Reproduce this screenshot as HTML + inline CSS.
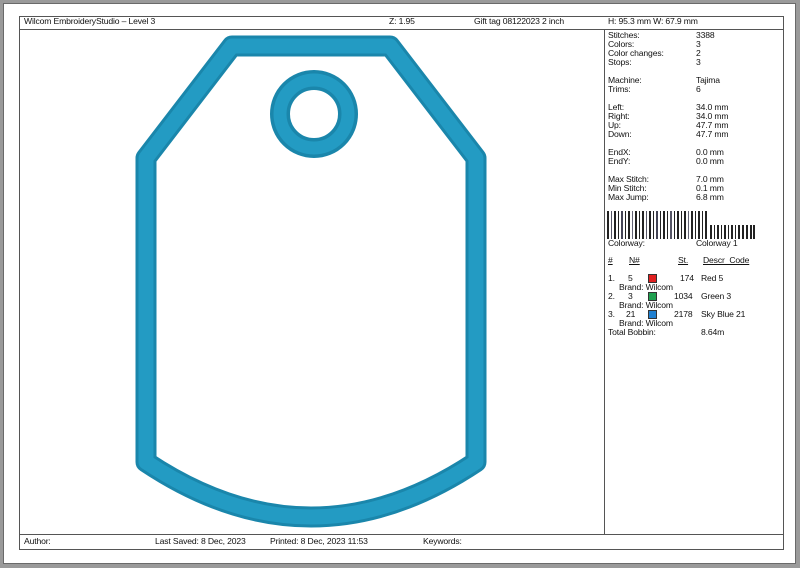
<!DOCTYPE html>
<html><head><meta charset="utf-8"><style>
html,body{margin:0;padding:0}
body{width:800px;height:568px;background:#9a9a9a;position:relative;overflow:hidden;font-family:"Liberation Sans",Arial,sans-serif;font-size:8.6px;color:#111;letter-spacing:-0.15px}
#page{position:absolute;left:3px;top:3px;width:793px;height:561px;background:#fff;border:1px solid #6a6a6a;box-sizing:border-box}
#frame{position:absolute;left:19px;top:16px;width:765px;height:534px;border:1px solid #555;box-sizing:border-box}
.t{position:absolute;white-space:nowrap;line-height:9px}
.hl{position:absolute;background:#555}
u{text-decoration:underline}
.sw{position:absolute;width:7px;height:7px;border:1px solid #333}
</style></head><body>
<div id="page"></div>
<div id="frame"></div>
<div class="hl" style="left:19px;top:29px;width:765px;height:1px"></div>
<div class="hl" style="left:19px;top:534px;width:765px;height:1px"></div>
<div class="hl" style="left:604px;top:29px;width:1px;height:505px"></div>

<div class="t" style="left:24px;top:17px">Wilcom EmbroideryStudio – Level 3</div>
<div class="t" style="left:389px;top:17px">Z: 1.95</div>
<div class="t" style="left:474px;top:17px">Gift tag  08122023 2 inch</div>
<div class="t" style="left:608px;top:17px">H: 95.3 mm   W: 67.9 mm</div>

<div class="t" style="left:24px;top:537px">Author:</div>
<div class="t" style="left:155px;top:537px">Last Saved:  8 Dec, 2023</div>
<div class="t" style="left:270px;top:537px">Printed:  8 Dec, 2023 11:53</div>
<div class="t" style="left:423px;top:537px">Keywords:</div>

<svg style="position:absolute;left:0;top:0" width="800" height="568">
<g fill="none" stroke="#1a86ab" stroke-linejoin="round">
<path d="M146 158 L232 46 L390 46 L476 158 L476 462 Q311 572 146 462 Z" stroke-width="21"/>
<path d="M146 158 L232 46 L390 46 L476 158 L476 462 Q311 572 146 462 Z" stroke="#239bc3" stroke-width="15"/>
<circle cx="314" cy="114" r="34" stroke-width="20"/>
<circle cx="314" cy="114" r="34" stroke="#239bc3" stroke-width="13"/>
</g>
<g fill="#222">
<rect x="607" y="211" width="2" height="28"/><rect x="611" y="211" width="1" height="28" fill="#556"/><rect x="614" y="211" width="2" height="28"/><rect x="618" y="211" width="1" height="28"/><rect x="621" y="211" width="2" height="28" fill="#445"/><rect x="625" y="211" width="1" height="28"/><rect x="628" y="211" width="2" height="28"/><rect x="632" y="211" width="1" height="28" fill="#667"/><rect x="635" y="211" width="2" height="28"/><rect x="639" y="211" width="1" height="28"/><rect x="642" y="211" width="2" height="28"/><rect x="646" y="211" width="1" height="28" fill="#556"/><rect x="649" y="211" width="2" height="28"/><rect x="653" y="211" width="1" height="28"/><rect x="656" y="211" width="2" height="28" fill="#445"/><rect x="660" y="211" width="1" height="28"/><rect x="663" y="211" width="2" height="28"/><rect x="667" y="211" width="1" height="28"/><rect x="670" y="211" width="2" height="28" fill="#556"/><rect x="674" y="211" width="1" height="28"/><rect x="677" y="211" width="2" height="28"/><rect x="681" y="211" width="1" height="28"/><rect x="684" y="211" width="2" height="28"/><rect x="688" y="211" width="1" height="28" fill="#667"/><rect x="691" y="211" width="2" height="28"/><rect x="695" y="211" width="1" height="28"/><rect x="698" y="211" width="2" height="28"/><rect x="702" y="211" width="1" height="28"/><rect x="705" y="211" width="2" height="28"/>
<rect x="710" y="225" width="2" height="14"/><rect x="714" y="225" width="1" height="14"/><rect x="717" y="225" width="2" height="14"/><rect x="721" y="225" width="1" height="14"/><rect x="724" y="225" width="2" height="14"/><rect x="728" y="225" width="1" height="14"/><rect x="731" y="225" width="2" height="14"/><rect x="735" y="225" width="1" height="14"/><rect x="738" y="225" width="2" height="14"/><rect x="742" y="225" width="2" height="14"/><rect x="746" y="225" width="2" height="14"/><rect x="750" y="225" width="2" height="14"/><rect x="753" y="225" width="2" height="14"/>
</g>
</svg>

<div class="t" style="left:608px;top:31px">Stitches:<br>Colors:<br>Color changes:<br>Stops:<br><br>Machine:<br>Trims:<br><br>Left:<br>Right:<br>Up:<br>Down:<br><br>EndX:<br>EndY:<br><br>Max Stitch:<br>Min Stitch:<br>Max Jump:</div>
<div class="t" style="left:696px;top:31px">3388<br>3<br>2<br>3<br><br>Tajima<br>6<br><br>34.0 mm<br>34.0 mm<br>47.7 mm<br>47.7 mm<br><br>0.0 mm<br>0.0 mm<br><br>7.0 mm<br>0.1 mm<br>6.8 mm</div>

<div class="t" style="left:608px;top:239px">Colorway:</div>
<div class="t" style="left:696px;top:239px">Colorway 1</div>

<div class="t" style="left:608px;top:256px"><u>#</u></div>
<div class="t" style="left:629px;top:256px"><u>N#</u></div>
<div class="t" style="left:678px;top:256px"><u>St.</u></div>
<div class="t" style="left:703px;top:256px"><u>Descr_Code</u></div>

<div class="t" style="left:608px;top:274px">1.</div><div class="t" style="left:628px;top:274px">5</div><div class="sw" style="left:648px;top:274px;background:#e02020"></div><div class="t" style="left:680px;top:274px">174</div><div class="t" style="left:701px;top:274px">Red 5</div>
<div class="t" style="left:619px;top:283px">Brand: Wilcom</div>
<div class="t" style="left:608px;top:292px">2.</div><div class="t" style="left:628px;top:292px">3</div><div class="sw" style="left:648px;top:292px;background:#20a050"></div><div class="t" style="left:674px;top:292px">1034</div><div class="t" style="left:701px;top:292px">Green 3</div>
<div class="t" style="left:619px;top:301px">Brand: Wilcom</div>
<div class="t" style="left:608px;top:310px">3.</div><div class="t" style="left:626px;top:310px">21</div><div class="sw" style="left:648px;top:310px;background:#2080d0"></div><div class="t" style="left:674px;top:310px">2178</div><div class="t" style="left:701px;top:310px">Sky Blue 21</div>
<div class="t" style="left:619px;top:319px">Brand: Wilcom</div>
<div class="t" style="left:608px;top:328px">Total Bobbin:</div><div class="t" style="left:701px;top:328px">8.64m</div>
</body></html>
